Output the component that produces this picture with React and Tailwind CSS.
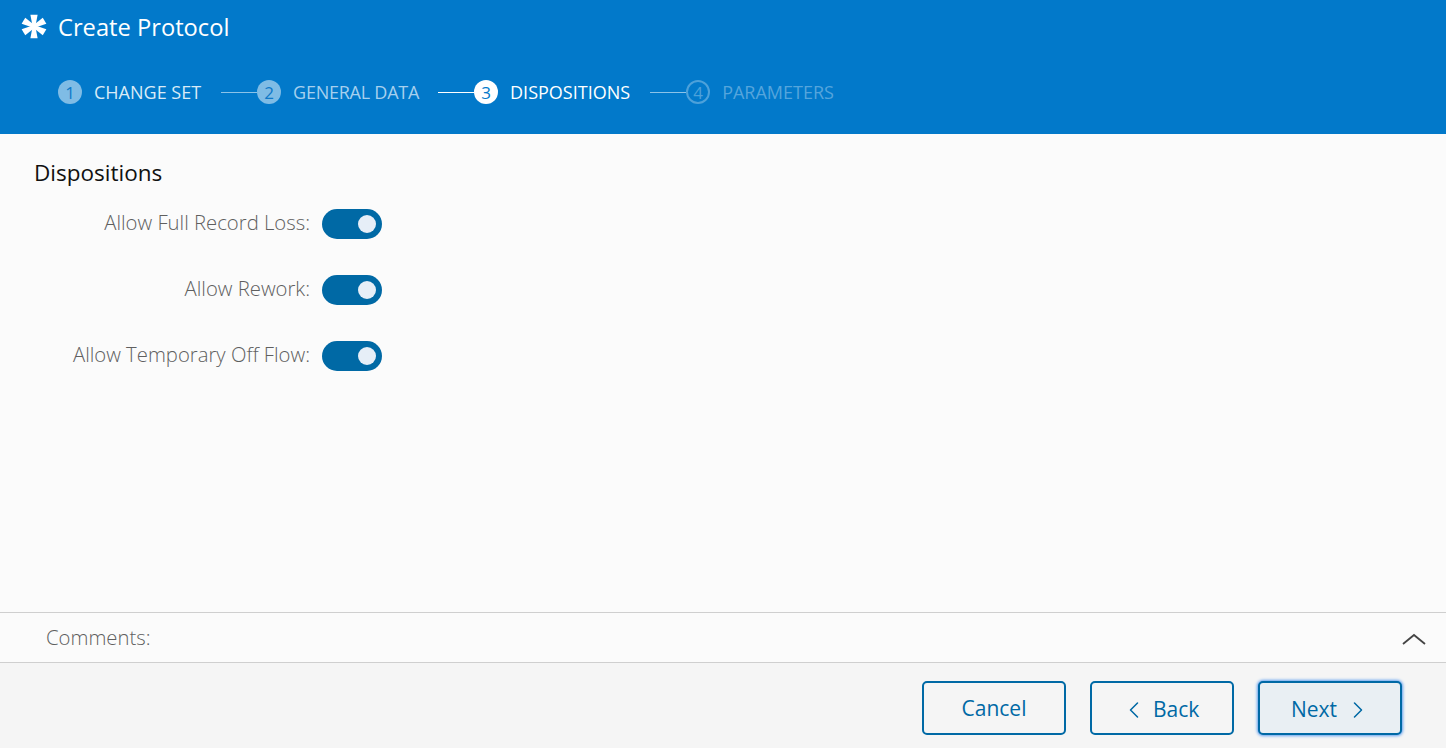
import React from 'react';
import { ChevronLeft, ChevronRight } from 'lucide-react';

const font = { fontFamily: '"Open Sans", sans-serif' };

function Step({ n, label, state, first }) {
    const circle = {
        done: 'bg-[#7fbce5] text-[#0f79c8]',
        active: 'bg-white text-[#0279ca]',
        todo: 'border-2 border-[#4da1da] text-[#4da1da]',
    }[state];
    const text = {
        done: n === 2 ? 'text-[#a6d0ee] tracking-[-0.25px]' : 'text-[#d9ebf7]',
        active: 'text-white',
        todo: 'text-[#55a5dc]',
    }[state];
    return (
        <div className="flex items-center">
            {!first && <div className={`w-9 h-px ${state === 'active' ? 'bg-white' : 'bg-[#8cc3e8]'}`}></div>}
            <div className={`w-6 h-6 rounded-full flex items-center justify-center text-[17px] leading-none ${circle}`}>{n}</div>
            <span className={`ml-3 text-lg leading-6 ${text}`}>{label}</span>
        </div>
    );
}

function Toggle({ label }) {
    return (
        <div className="flex items-center h-[30px]">
            <span className="w-[310px] pb-[4px] text-right text-[20.3px] font-light leading-[26px] text-[#5f5f5f]">{label}</span>
            <div className="ml-3 w-[60px] h-[30px] rounded-full bg-[#0069a5] flex items-center justify-end pr-[6px]">
                <div className="w-[18px] h-[18px] rounded-full bg-[#e6eef7]"></div>
            </div>
        </div>
    );
}

const ARMS = [0, 60, 120, 180, 240, 300];

export default function App() {
    return (
        <div style={font} className="w-[1446px] h-[748px] flex flex-col overflow-hidden bg-[#fbfbfb]">
            {/* Header */}
            <div className="h-[134px] bg-[#0279ca] shrink-0">
                <div className="flex items-center pl-[21px] pt-[14px] h-[40px]">
                    <svg width="26" height="25" viewBox="0 0 26 26" preserveAspectRatio="none" fill="white" className="-mt-px">
                        {ARMS.map(a => (
                            <path key={a} d="M11.6 13 L9.4 0.8 L16.6 0.8 L14.4 13 Z" transform={`rotate(${a} 13 13)`} />
                        ))}
                    </svg>
                    <span className="ml-[11px] -mt-px text-[23.7px] leading-7 text-white">Create Protocol</span>
                </div>
                <div className="flex items-center pl-[58px] mt-[40px] h-6">
                    <Step first n={1} label="CHANGE SET" state="done" />
                    <div className="w-5"></div>
                    <Step n={2} label="GENERAL DATA" state="done" />
                    <div className="w-[19px]"></div>
                    <Step n={3} label="DISPOSITIONS" state="active" />
                    <div className="w-5"></div>
                    <Step n={4} label="PARAMETERS" state="todo" />
                </div>
            </div>

            {/* Body */}
            <div className="flex-1">
                <h2 className="pl-[34px] pt-[25px] text-[22.5px] leading-7 text-[#111]">Dispositions</h2>
                <div className="mt-[22px] flex flex-col gap-9">
                    <Toggle label="Allow Full Record Loss:" />
                    <Toggle label="Allow Rework:" />
                    <Toggle label="Allow Temporary Off Flow:" />
                </div>
            </div>

            {/* Comments */}
            <div className="h-[51px] shrink-0 border-y border-[#cfcfcf] flex items-center justify-between pl-[46px] pr-[19px]">
                <span className="text-[20.3px] font-light text-[#5f5f5f]">Comments:</span>
                <svg width="26" height="14" viewBox="0 0 26 14" fill="none" stroke="#444" strokeWidth="1.8" className="mt-[3px]">
                    <polyline points="2,12 13,3 24,12" />
                </svg>
            </div>

            {/* Footer */}
            <div className="h-[85px] shrink-0 bg-[#f5f5f5] flex items-start justify-end gap-6 pt-[18px] pr-[44px]">
                <button className="w-[144px] h-[54px] rounded-[5px] border-2 border-[#0069a5] text-[#0069a5] text-[21px] flex items-center justify-center pt-px">Cancel</button>
                <button className="w-[144px] h-[54px] rounded-[5px] border-2 border-[#0069a5] text-[#0069a5] text-[21px] flex items-center justify-start gap-[5px] pl-7 pt-[3px]">
                    <ChevronLeft className="w-7 h-7" strokeWidth={1.3} />
                    Back
                </button>
                <button className="w-[144px] h-[54px] rounded-[5px] border-2 border-[#0069a5] bg-[#e9eff3] text-[#0069a5] text-[21px] flex items-center justify-start gap-[7px] pl-[31px] pt-[3px] shadow-[0_0_3px_1px_#5f9ff0]">
                    Next
                    <ChevronRight className="w-7 h-7" strokeWidth={1.3} />
                </button>
            </div>
        </div>
    );
}
